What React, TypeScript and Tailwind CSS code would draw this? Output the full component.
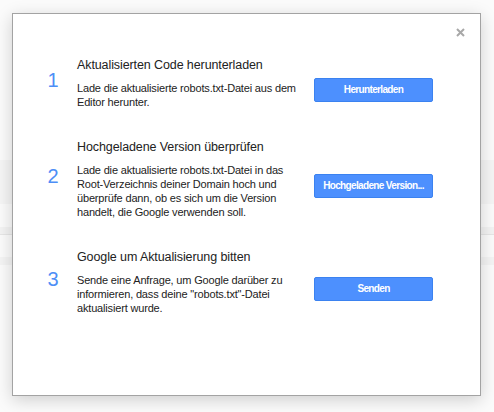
import React from "react"

const steps = [
  {
    num: "1",
    title: "Aktualisierten Code herunterladen",
    text: "Lade die aktualisierte robots.txt-Datei aus dem Editor herunter.",
    button: "Herunterladen",
  },
  {
    num: "2",
    title: "Hochgeladene Version überprüfen",
    text: "Lade die aktualisierte robots.txt-Datei in das Root-Verzeichnis deiner Domain hoch und überprüfe dann, ob es sich um die Version handelt, die Google verwenden soll.",
    button: "Hochgeladene Version...",
  },
  {
    num: "3",
    title: "Google um Aktualisierung bitten",
    text: 'Sende eine Anfrage, um Google darüber zu informieren, dass deine "robots.txt"-Datei aktualisiert wurde.',
    button: "Senden",
  },
]

export default function App() {
  return (
    <div className="relative h-[412px] w-[494px] overflow-hidden bg-[#fbfbfb] font-['Liberation_Sans',Arial,sans-serif]">
      {/* faded page behind the dialog */}
      <div className="h-[160px]" />
      <div className="h-[44px] bg-[#f5f5f5]" />
      <div className="h-[23px]" />
      <div className="h-[8px] border-b border-[#e6e6e6] bg-[#f3f3f3]" />
      <div className="h-[22px]" />
      <div className="h-[8px] bg-[#f4f4f4]" />

      <div className="absolute left-[12px] top-[13px] h-[383px] w-[469px] border border-[#a3a3a3] bg-white shadow-[0_4px_16px_rgba(0,0,0,0.18)]">
        <button className="absolute right-[14px] top-[13px] p-[1px]">
          <svg width="9" height="9" viewBox="0 0 9 9">
            <path d="M1 1 L8 8 M8 1 L1 8" stroke="#a8a8a8" strokeWidth="2" />
          </svg>
        </button>

        <div className="pt-[42px]">
          {steps.map((s, i) => (
            <div key={i} className={i === 0 ? "" : "mt-[29px]"}>
              <h3 className="pl-[64px] text-[12.5px] leading-[18px] tracking-[-0.1px] text-[#222]">{s.title}</h3>
              <div className="mt-[7px] flex items-center">
                <div className="-mt-[30px] w-[64px] pl-[16px] text-center text-[20px] leading-[22px] text-[#4d8ef6]">
                  {s.num}
                </div>
                <p className="w-[222px] text-[11px] leading-[14px] tracking-[-0.17px] text-[#222]">{s.text}</p>
                <button className="-mt-[11px] ml-[15px] h-[24px] w-[119px] rounded-[2px] border border-[#3b82f0] bg-[#4d90fe] text-[10px] font-bold tracking-[-0.65px] text-white">
                  {s.button}
                </button>
              </div>
            </div>
          ))}
        </div>
      </div>
    </div>
  )
}
